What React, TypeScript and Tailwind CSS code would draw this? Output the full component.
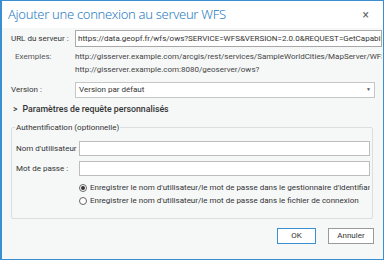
import React from 'react';

const font = { fontFamily: '"Segoe UI", Roboto, "Noto Sans", sans-serif' };
const titleFont = { fontFamily: '"Segoe UI", "Noto Sans", sans-serif' };

const App: React.FC = () => {
  return (
    <div
      className="w-[384px] h-[260px] overflow-hidden border border-[#3b8fd1] border-l-2 bg-[#f6f8f8] text-[#333] flex flex-col"
      style={font}
    >
      {/* barre de titre */}
      <div className="h-[27px] shrink-0 flex items-center justify-between pl-[6px] pr-[14px] bg-white">
        <span className="text-[13px] text-[#2c7cc1] font-light tracking-[-0.3px]" style={titleFont}>
          Ajouter une connexion au serveur WFS
        </span>
        <span className="text-[12px] text-[#666] leading-none">×</span>
      </div>

      <div className="flex flex-col pl-[9px] pr-[1px] text-[8px] whitespace-nowrap">
        {/* URL */}
        <div className="flex items-center mt-[2px]">
          <div className="w-[64px] shrink-0">URL du serveur :</div>
          <div className="flex-1 min-w-0 h-[17px] border border-[#a9a9a9] bg-white flex items-center px-[2px] overflow-hidden">
            https://data.geopf.fr/wfs/ows?SERVICE=WFS&amp;VERSION=2.0.0&amp;REQUEST=GetCapabilities
          </div>
        </div>

        {/* Exemples */}
        <div className="flex mt-[3px] leading-[13px]">
          <div className="w-[64px] shrink-0 pl-[4px] text-[#555]">Exemples:</div>
          <div className="flex flex-col text-[#444] min-w-0 overflow-hidden">
            <span>http://gisserver.example.com/arcgis/rest/services/SampleWorldCities/MapServer/WFSServer?</span>
            <span>http://gisserver.example.com:8080/geoserver/ows?</span>
          </div>
        </div>

        {/* Version */}
        <div className="flex items-center mt-[6px] pr-[7px]">
          <div className="w-[64px] shrink-0">Version :</div>
          <div className="flex-1 h-[16px] border border-[#c6c6c6] bg-white flex items-center justify-between px-[3px]">
            <span>Version par défaut</span>
            <span className="text-[5px] text-[#555]">▼</span>
          </div>
        </div>

        {/* Paramètres */}
        <div className="flex items-center mt-[5px] pl-[2px] font-medium text-[8.75px] text-[#333]">
          <span className="mr-[5px]">&gt;</span>
          Paramètres de requête personnalisés
        </div>

        {/* Authentification */}
        <div className="relative mt-[11px] mr-[9px] border border-[#dcdfe0] rounded-[2px] pt-[13px] pb-[11px] pl-[4px] pr-[2px]">
          <span className="absolute -top-[7px] left-[3px] px-[1px] bg-[#f6f8f8] leading-[13px]">
            Authentification (optionnelle)
          </span>
          <div className="flex items-center">
            <div className="w-[63px] shrink-0">Nom d'utilisateur :</div>
            <div className="flex-1 h-[15px] border border-[#bdbdbd] bg-white" />
          </div>
          <div className="flex items-center mt-[5px]">
            <div className="w-[63px] shrink-0">Mot de passe :</div>
            <div className="flex-1 h-[15px] border border-[#bdbdbd] bg-white" />
          </div>
          <div className="flex flex-col pl-[63px] mt-[5px] leading-[13px] overflow-hidden">
            <div className="flex items-center">
              <span className="w-[8px] h-[8px] shrink-0 rounded-full border border-[#666] bg-white flex items-center justify-center mr-[3px]">
                <span className="w-[4px] h-[4px] rounded-full bg-[#333]" />
              </span>
              Enregistrer le nom d'utilisateur/le mot de passe dans le gestionnaire d'identifiants c
            </div>
            <div className="flex items-center">
              <span className="w-[8px] h-[8px] shrink-0 rounded-full border border-[#666] bg-white mr-[3px]" />
              Enregistrer le nom d'utilisateur/le mot de passe dans le fichier de connexion
            </div>
          </div>
        </div>

        {/* Boutons */}
        <div className="flex justify-end gap-[12px] mt-[9px] mr-[8px]">
          <button className="w-[39px] h-[16px] border border-[#3b8fd1] bg-white text-[8px] leading-none">OK</button>
          <button className="w-[46px] h-[16px] border border-[#9a9a9a] bg-white text-[8px] leading-none">Annuler</button>
        </div>
      </div>
    </div>
  );
};

export default App;
